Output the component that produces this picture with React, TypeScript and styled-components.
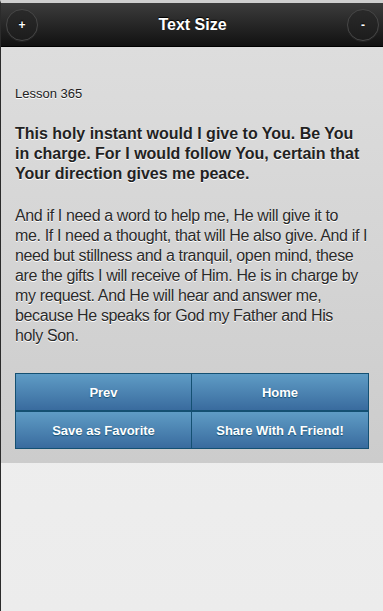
import React from 'react'
import styled, { createGlobalStyle } from 'styled-components'

// __________
//
type Action = { label: string }

// body lines are kept as they wrap on the device
const lesson = {
  title: 'Lesson 365',
  prayer:
    'This holy instant would I give to You. Be You in charge. For I would follow You, certain that Your direction gives me peace.',
  body: [
    'And if I need a word to help me, He will give it to',
    'me. If I need a thought, that will He also give. And if I',
    'need but stillness and a tranquil, open mind, these',
    'are the gifts I will receive of Him. He is in charge by',
    'my request. And He will hear and answer me,',
    'because He speaks for God my Father and His',
    'holy Son.',
  ],
}

const actions: Action[] = [
  { label: 'Prev' },
  { label: 'Home' },
  { label: 'Save as Favorite' },
  { label: 'Share With A Friend!' },
]

// __________
//
const App: React.FC = () => {
  return (
    <>
      <GlobalStyle />
      <Page>
        <Header>
          <RoundButton>+</RoundButton>
          <Title>Text Size</Title>
          <RoundButton>-</RoundButton>
        </Header>
        <Content>
          <LessonName>{lesson.title}</LessonName>
          <Prayer>{lesson.prayer}</Prayer>
          <Body>
            {lesson.body.map((line) => (
              <Line key={line}>{line}</Line>
            ))}
          </Body>
          <ButtonGrid>
            {actions.map((a, i) => (
              <ActionButton key={a.label} $left={i % 2 === 0}>
                {a.label}
              </ActionButton>
            ))}
          </ButtonGrid>
        </Content>
      </Page>
    </>
  )
}

// __________
//
const GlobalStyle = createGlobalStyle`
  html, body {
    margin: 0;
    padding: 0;
    height: 100%;
  }
  body {
    font-family: "Liberation Sans", Arial, Helvetica, sans-serif;
    background: #f0f0f0;
  }
  #root {
    min-height: 100%;
  }
`

const Page = styled.div`
  min-height: 611px;
  box-sizing: border-box;
  border-left: 1px solid #2b2b2b;
  border-top: 3px solid #cfcfcf;
  background: linear-gradient(#f2f2f2, #ececec);
`

const Header = styled.div`
  height: 43px;
  display: flex;
  align-items: center;
  justify-content: space-between;
  padding: 0 4px 0 5px;
  background: linear-gradient(#3c3c3c, #111111);
  border-bottom: 1px solid #000;
`

const RoundButton = styled.div`
  width: 30px;
  height: 30px;
  border-radius: 50%;
  border: 1px solid #474747;
  background: linear-gradient(#2a2a2a, #1c1c1c);
  display: flex;
  align-items: center;
  justify-content: center;
  color: #fff;
  font-size: 12px;
  font-weight: bold;
  text-shadow: 0 -1px 1px #000;
  box-shadow: 0 1px 0 rgba(255, 255, 255, 0.06);
`

const Title = styled.div`
  color: #fff;
  font-size: 16px;
  font-weight: bold;
  text-shadow: 0 -1px 1px #000;
`

const Content = styled.div`
  padding: 39px 14px 14px;
  background: linear-gradient(#dddddd, #cccccc);
  color: #222;
  text-shadow: 0 1px 0 #fff;
`

const LessonName = styled.div`
  font-size: 13px;
  line-height: 15px;
  color: #222;
`

const Prayer = styled.div`
  margin-top: 23px;
  font-size: 16px;
  font-weight: bold;
  line-height: 20px;
`

const Body = styled.div`
  margin-top: 22px;
  font-size: 16px;
  line-height: 20px;
  letter-spacing: -0.36px;
  color: #2a2a2a;
`

const Line = styled.span`
  display: block;
  white-space: nowrap;
`

const ButtonGrid = styled.div`
  margin-top: 27px;
  display: grid;
  grid-template-columns: 1fr 1fr;
`

const ActionButton = styled.div<{ $left: boolean }>`
  height: 36px;
  display: flex;
  align-items: center;
  justify-content: center;
  border: 1px solid #145072;
  border-left-width: ${(p) => (p.$left ? '1px' : '0')};
  background: linear-gradient(#5f9cc5, #396b9e);
  color: #fff;
  font-size: 13px;
  font-weight: bold;
  text-shadow: 0 1px 1px #145072;
`

export default App
